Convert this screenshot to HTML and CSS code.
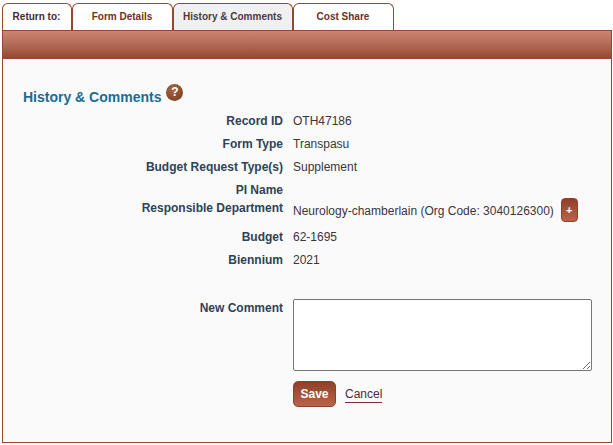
FILE: index.html
```html
<!DOCTYPE html>
<html lang="en">
<head>
  <meta charset="UTF-8">
  <title>History &amp; Comments</title>
  <link rel="stylesheet" href="styles.css">
</head>
<body>

  <div class="tabs">
    <a class="tab tab-return">Return to:</a>
    <a class="tab tab-wide">Form Details</a>
    <a class="tab tab-active">History &amp; Comments</a>
    <a class="tab tab-wide">Cost Share</a>
  </div>

  <div class="panel">
    <div class="band"></div>

    <div class="content">
      <h2 class="title">
        History &amp; Comments
        <span class="help">?</span>
      </h2>

      <div class="row"><div class="label">Record ID</div><div class="value">OTH47186</div></div>
      <div class="row"><div class="label">Form Type</div><div class="value">Transpasu</div></div>
      <div class="row"><div class="label">Budget Request Type(s)</div><div class="value">Supplement</div></div>
      <div class="row row-short"><div class="label">PI Name</div><div class="value"></div></div>
      <div class="row row-dept">
        <div class="label">Responsible Department</div>
        <div class="value value-dept">
          Neurology-chamberlain (Org Code: 3040126300)
          <button class="plus">+</button>
        </div>
      </div>
      <div class="row"><div class="label">Budget</div><div class="value">62-1695</div></div>
      <div class="row"><div class="label">Biennium</div><div class="value">2021</div></div>

      <div class="row row-comment">
        <div class="label">New Comment</div>
        <textarea class="comment"></textarea>
      </div>

      <div class="actions">
        <button class="save">Save</button>
        <a class="cancel">Cancel</a>
      </div>
    </div>
  </div>

</body>
</html>
```

FILE: styles.css
```css
body {
  font-family: "Liberation Sans", Arial, sans-serif;
  font-size: 12px;
  color: #333;
  background-color: #fff;
  margin: 0;
  padding: 3px 1px 0 2px;
}
.tabs {
  display: flex;
  height: 27px;
}
.tab {
  box-sizing: border-box;
  width: 101px;
  height: 27px;
  padding: 7px 1px 0 0;
  text-align: center;
  font-size: 10px;
  font-weight: bold;
  line-height: 12px;
  color: #6b3226;
  background-color: #fff;
  border: 1px solid #96452f;
  border-bottom: none;
  border-radius: 6px 6px 0 0;
}
.tab-return {
  width: 70px;
  color: #4a2a2a;
}
.tab-active {
  width: 120px;
  color: #4a3a40;
  background-color: #f0f0f0;
}
.panel {
  box-sizing: border-box;
  height: 413px;
  border: 1px solid #96452f;
  background-color: #fafafa;
}
.band {
  height: 28px;
  background: linear-gradient(#cb8570, #b56d58 45%, #94452f);
}
.content {
  padding-top: 28px;
}
.title {
  margin: 0 0 0 20px;
  height: 27px;
  font-size: 14px;
  font-weight: bold;
  line-height: 20px;
  color: #1b6a98;
}
.help {
  display: inline-block;
  position: relative;
  top: -6px;
  left: -1px;
  width: 17px;
  height: 17px;
  margin-left: 2px;
  border-radius: 50%;
  background: radial-gradient(circle at 40% 30%, #a9663f, #713a1e);
  color: #fff;
  font-size: 12px;
  line-height: 17px;
  text-align: center;
  vertical-align: middle;
}
.row {
  display: flex;
  gap: 10px;
  height: 23px;
  line-height: 14px;
}
.row-short {
  height: 18px;
}
.row-dept {
  height: 29px;
}
.label {
  width: 280px;
  text-align: right;
  font-weight: bold;
  color: #2d4358;
}
.value {
  color: #3a3440;
}
.value-dept {
  display: flex;
  align-items: flex-start;
  gap: 7px;
  padding-top: 3px;
}
.plus {
  width: 17px;
  height: 24px;
  margin-top: -6px;
  padding: 0;
  border: 1px solid #8f4029;
  border-radius: 4px;
  background: linear-gradient(#8f4029, #b9634a);
  color: #fff;
  font-family: inherit;
  font-size: 11px;
  font-weight: bold;
}
.row-comment {
  height: 82px;
  margin-top: 25px;
}
.comment {
  box-sizing: border-box;
  width: 299px;
  height: 72px;
  margin: -2px 0 0;
  padding: 2px;
  border: 1px solid #767676;
  border-radius: 2px;
  background-color: #fff;
}
.actions {
  display: flex;
  align-items: center;
  gap: 9px;
  margin-left: 290px;
  margin-top: -2px;
}
.save {
  width: 43px;
  height: 26px;
  padding: 0;
  border: 1px solid #8f4029;
  border-radius: 5px;
  background: linear-gradient(#8f4029, #b9634a);
  color: #fff;
  font-family: inherit;
  font-size: 12px;
  font-weight: bold;
}
.cancel {
  margin-top: 2px;
  color: #4a2a3a;
  text-decoration: none;
  line-height: 14px;
  padding-bottom: 1px;
  border-bottom: 1px solid #7a2f2a;
}
```
